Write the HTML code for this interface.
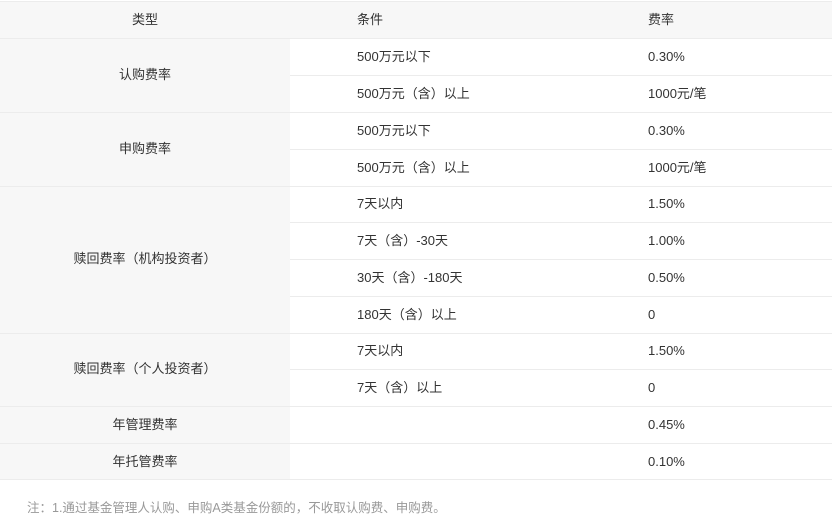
<!DOCTYPE html><html><head><meta charset="utf-8"><style>
body{margin:0;width:832px;height:524px;background:#fff;font-family:"Liberation Sans","Noto Sans CJK SC",sans-serif;font-size:13px;color:#333;position:relative;overflow:hidden}
.a{position:absolute}
.g{background:#f7f7f7}
.l{position:absolute;height:1px;background:#ececec}
.t{position:absolute;line-height:20px;white-space:nowrap}
.c{position:absolute;left:0;width:290px;text-align:center;line-height:20px}
</style></head><body>
<div class="a g" style="left:0;top:2px;width:832px;height:36px"></div>
<div class="a g" style="left:0;top:38px;width:290px;height:441px"></div>
<div class="l" style="left:0;top:1px;width:832px"></div>
<div class="t" style="left:0;width:290px;text-align:center;top:10px">类型</div>
<div class="t" style="left:357px;top:10px">条件</div>
<div class="t" style="left:648px;top:10px">费率</div>
<div class="l" style="left:0;top:38px;width:832px"></div>
<div class="l" style="left:290px;top:75px;width:542px"></div>
<div class="l" style="left:0;top:112px;width:832px"></div>
<div class="l" style="left:290px;top:149px;width:542px"></div>
<div class="l" style="left:0;top:186px;width:832px"></div>
<div class="l" style="left:290px;top:222px;width:542px"></div>
<div class="l" style="left:290px;top:259px;width:542px"></div>
<div class="l" style="left:290px;top:296px;width:542px"></div>
<div class="l" style="left:0;top:333px;width:832px"></div>
<div class="l" style="left:290px;top:369px;width:542px"></div>
<div class="l" style="left:0;top:406px;width:832px"></div>
<div class="l" style="left:0;top:443px;width:832px"></div>
<div class="l" style="left:0;top:479px;width:832px"></div>
<div class="c" style="top:65px">认购费率</div>
<div class="c" style="top:139px">申购费率</div>
<div class="c" style="top:249px">赎回费率（机构投资者）</div>
<div class="c" style="top:359px">赎回费率（个人投资者）</div>
<div class="c" style="top:415px">年管理费率</div>
<div class="c" style="top:452px">年托管费率</div>
<div class="t" style="left:357px;top:47px">500万元以下</div><div class="t" style="left:648px;top:47px">0.30%</div>
<div class="t" style="left:357px;top:84px">500万元（含）以上</div><div class="t" style="left:648px;top:84px">1000元/笔</div>
<div class="t" style="left:357px;top:121px">500万元以下</div><div class="t" style="left:648px;top:121px">0.30%</div>
<div class="t" style="left:357px;top:158px">500万元（含）以上</div><div class="t" style="left:648px;top:158px">1000元/笔</div>
<div class="t" style="left:357px;top:194px">7天以内</div><div class="t" style="left:648px;top:194px">1.50%</div>
<div class="t" style="left:357px;top:231px">7天（含）-30天</div><div class="t" style="left:648px;top:231px">1.00%</div>
<div class="t" style="left:357px;top:268px">30天（含）-180天</div><div class="t" style="left:648px;top:268px">0.50%</div>
<div class="t" style="left:357px;top:305px">180天（含）以上</div><div class="t" style="left:648px;top:305px">0</div>
<div class="t" style="left:357px;top:341px">7天以内</div><div class="t" style="left:648px;top:341px">1.50%</div>
<div class="t" style="left:357px;top:378px">7天（含）以上</div><div class="t" style="left:648px;top:378px">0</div>
<div class="t" style="left:648px;top:415px">0.45%</div>
<div class="t" style="left:648px;top:452px">0.10%</div>
<div class="t" style="left:27px;top:498px;color:#999;font-size:12.5px">注：1.通过基金管理人认购、申购A类基金份额的，不收取认购费、申购费。</div>
</body></html>
